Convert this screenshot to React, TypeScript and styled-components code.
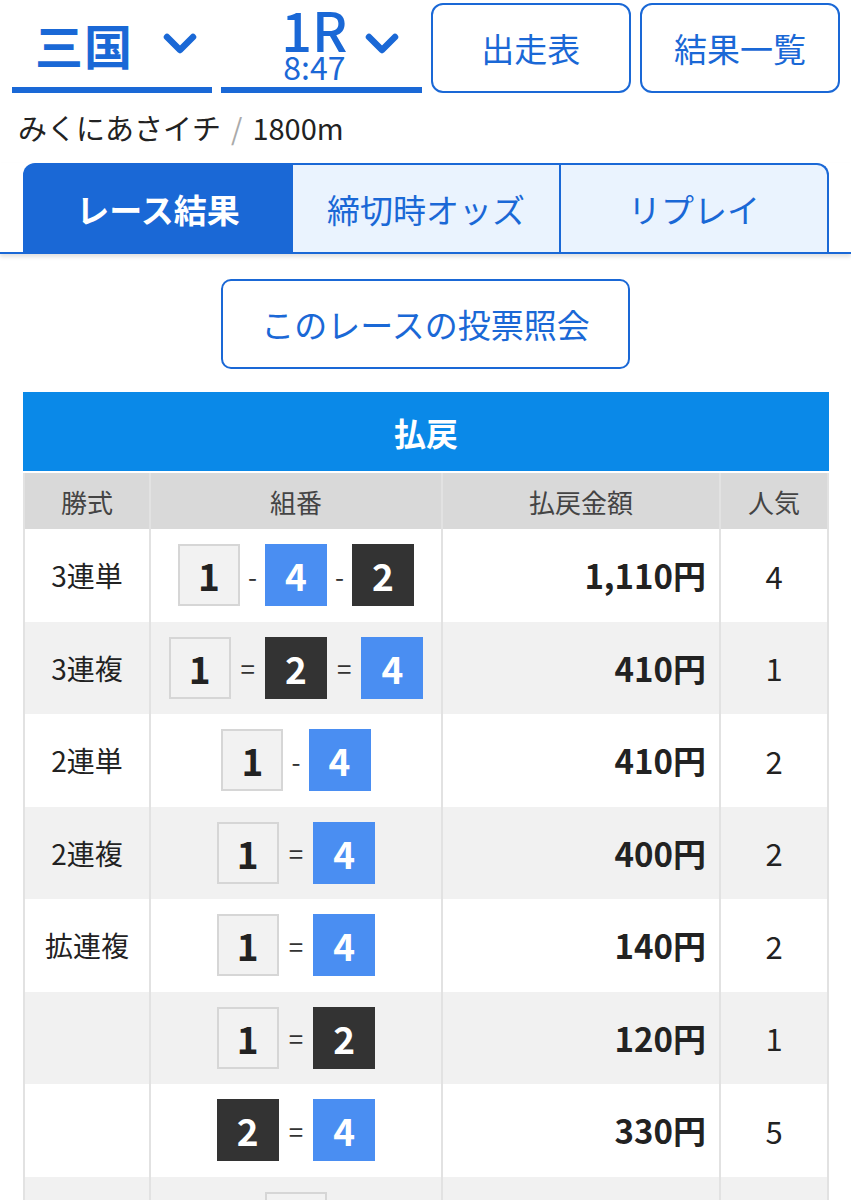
import React from 'react'
import styled, { createGlobalStyle } from 'styled-components'

const Global = createGlobalStyle`
  body {
    margin: 0;
    background: #fff;
    font-family: "Noto Sans CJK JP", "Noto Sans", sans-serif;
    color: #222;
  }
`

const BLUE = '#1a68d6'

const Header = styled.header`
  display: grid;
  grid-template-columns: repeat(4, 1fr);
  column-gap: 9px;
  padding: 3px 11px 0 12px;
`

const Select = styled.div<{ $gap: number; $pl: number }>`
  height: 87px;
  margin-top: -3px;
  border-bottom: 6px solid ${BLUE};
  display: flex;
  align-items: center;
  justify-content: center;
  gap: ${p => p.$gap}px;
  color: ${BLUE};
  padding-left: ${p => p.$pl}px;
`

const SelectLabel = styled.div`
  display: flex;
  flex-direction: column;
  align-items: center;
`

const Venue = styled.span`
  font-size: 48px;
  line-height: 56px;
  font-weight: 700;
  letter-spacing: 1px;
`

const RaceNo = styled.span`
  font-size: 54px;
  line-height: 44px;
  font-weight: 500;
`

const Time = styled.span`
  font-size: 32px;
  line-height: 30px;
`

const NavButton = styled.button`
  height: 90px;
  border: 2px solid ${BLUE};
  border-radius: 12px;
  background: #fff;
  color: ${BLUE};
  font-family: inherit;
  font-size: 33px;
`

const Sub = styled.div`
  padding: 13px 0 0 18px;
  height: 48px;
  font-size: 29px;
  line-height: 42px;
  color: #222;
  span { color: #aaa; margin: 0 10px; }
`

const TabBar = styled.div`
  margin-top: 9px;
  padding: 0 22px 0 23px;
  display: flex;
  border-bottom: 2px solid ${BLUE};
  box-shadow: 0 3px 4px rgba(0, 0, 0, 0.12);
`

const Tab = styled.div<{ $active?: boolean; $pos: 'first' | 'mid' | 'last' }>`
  flex: 1;
  height: 87px;
  display: flex;
  align-items: center;
  justify-content: center;
  font-size: 33px;
  border: 2px solid ${BLUE};
  border-bottom: none;
  border-left-width: ${p => (p.$pos === 'first' ? '2px' : '0')};
  border-radius: ${p => (p.$pos === 'first' ? '12px 0 0 0' : p.$pos === 'last' ? '0 12px 0 0' : '0')};
  background: ${p => (p.$active ? BLUE : '#eaf3fe')};
  color: ${p => (p.$active ? '#fff' : BLUE)};
  font-weight: ${p => (p.$active ? 700 : 400)};
`

const Center = styled.div`
  display: flex;
  justify-content: center;
  padding-top: 25px;
`

const InquiryButton = styled.button`
  width: 409px;
  height: 90px;
  border: 2px solid ${BLUE};
  border-radius: 10px;
  background: #fff;
  color: ${BLUE};
  font-family: inherit;
  font-size: 33px;
`

const Table = styled.div`
  margin: 23px 22px 0 23px;
`

const Title = styled.div`
  height: 79px;
  background: #0a89e8;
  color: #fff;
  font-size: 32px;
  font-weight: 700;
  display: flex;
  align-items: center;
  justify-content: center;
`

const Row = styled.div<{ $bg: string; $h: number }>`
  display: grid;
  grid-template-columns: 124px 292px 278px 108px;
  height: ${p => p.$h}px;
  background: ${p => p.$bg};
  border-left: 2px solid #e2e2e2;
  border-right: 2px solid #e2e2e2;
`

const Cell = styled.div<{ $align?: string; $weight?: number; $size?: number }>`
  display: flex;
  align-items: center;
  justify-content: ${p => p.$align || 'center'};
  font-size: ${p => p.$size || 28}px;
  font-weight: ${p => p.$weight || 400};
  color: #222;
  border-left: 2px solid #e2e2e2;
  padding-right: ${p => (p.$align === 'flex-end' ? '13px' : '0')};
  &:first-child { border-left: none; }
`

const HeadCell = styled(Cell)`
  font-size: 26px;
  color: #444;
`

const Box = styled.div<{ $kind: 'w' | 'b' | 'k' }>`
  width: 62px;
  height: 62px;
  box-sizing: border-box;
  display: flex;
  align-items: center;
  justify-content: center;
  font-size: 37px;
  font-weight: 600;
  background: ${p => (p.$kind === 'w' ? '#f2f2f2' : p.$kind === 'b' ? '#4a8ef2' : '#333')};
  color: ${p => (p.$kind === 'w' ? '#222' : '#fff')};
  border: ${p => (p.$kind === 'w' ? '2px solid #d6d6d6' : 'none')};
`

const Sep = styled.span<{ $eq?: boolean }>`
  font-size: 26px;
  color: #333;
  margin: 0 ${p => (p.$eq ? '10px' : '8px')};
`

function Chevron() {
  return (
    <svg width="34" height="24" viewBox="0 0 34 24">
      <polyline points="4,5 17,18 30,5" fill="none" stroke={BLUE} strokeWidth="6.5" strokeLinecap="round" strokeLinejoin="round" />
    </svg>
  )
}

type Kind = 'w' | 'b' | 'k'
const kindOf = (n: number): Kind => (n === 1 ? 'w' : n === 4 ? 'b' : 'k')

const rows: { type: string; nums: number[]; sep: string; amount: string; pop: string }[] = [
  { type: '3連単', nums: [1, 4, 2], sep: '-', amount: '1,110円', pop: '4' },
  { type: '3連複', nums: [1, 2, 4], sep: '=', amount: '410円', pop: '1' },
  { type: '2連単', nums: [1, 4], sep: '-', amount: '410円', pop: '2' },
  { type: '2連複', nums: [1, 4], sep: '=', amount: '400円', pop: '2' },
  { type: '拡連複', nums: [1, 4], sep: '=', amount: '140円', pop: '2' },
  { type: '', nums: [1, 2], sep: '=', amount: '120円', pop: '1' },
  { type: '', nums: [2, 4], sep: '=', amount: '330円', pop: '5' },
  { type: '単勝', nums: [1], sep: '', amount: '100円', pop: '1' },
]

export default function App() {
  return (
    <>
      <Global />
      <Header>
        <Select $gap={30} $pl={8}>
          <SelectLabel><Venue>三国</Venue></SelectLabel>
          <Chevron />
        </Select>
        <Select $gap={18} $pl={38}>
          <SelectLabel><RaceNo>1R</RaceNo><Time>8:47</Time></SelectLabel>
          <Chevron />
        </Select>
        <NavButton>出走表</NavButton>
        <NavButton>結果一覧</NavButton>
      </Header>
      <Sub>みくにあさイチ<span>/</span>1800m</Sub>
      <TabBar>
        <Tab $active $pos="first">レース結果</Tab>
        <Tab $pos="mid">締切時オッズ</Tab>
        <Tab $pos="last">リプレイ</Tab>
      </TabBar>
      <Center>
        <InquiryButton>このレースの投票照会</InquiryButton>
      </Center>
      <Table>
        <Title>払戻</Title>
        <Row $bg="#d9d9d9" $h={56} style={{ marginTop: 2 }}>
          <HeadCell>勝式</HeadCell>
          <HeadCell>組番</HeadCell>
          <HeadCell>払戻金額</HeadCell>
          <HeadCell>人気</HeadCell>
        </Row>
        {rows.map((r, i) => (
          <Row key={i} $bg={i % 2 === 0 ? '#fff' : '#f1f1f1'} $h={92.5}>
            <Cell>{r.type}</Cell>
            <Cell>
              {r.nums.map((n, j) => (
                <React.Fragment key={j}>
                  {j > 0 && <Sep $eq={r.sep === '='}>{r.sep}</Sep>}
                  <Box $kind={kindOf(n)}>{n}</Box>
                </React.Fragment>
              ))}
            </Cell>
            <Cell $align="flex-end" $weight={700} $size={33}>{r.amount}</Cell>
            <Cell $size={31}>{r.pop}</Cell>
          </Row>
        ))}
      </Table>
    </>
  )
}
